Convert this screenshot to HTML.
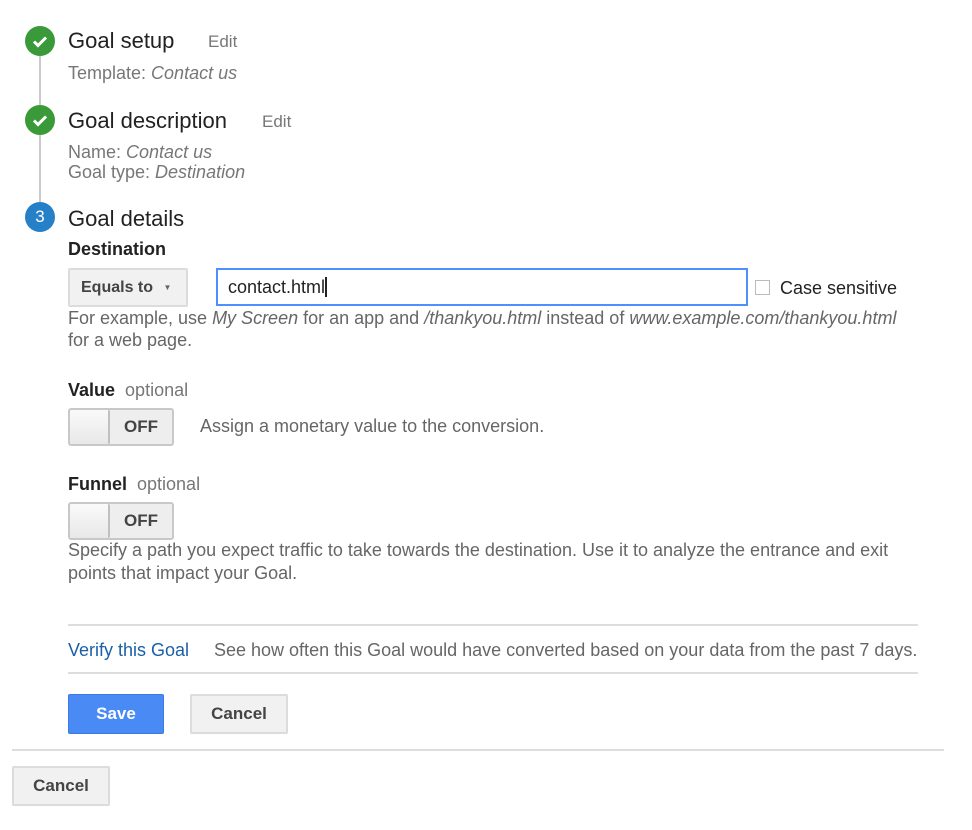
<!DOCTYPE html>
<html><head><style>
*{margin:0;padding:0;box-sizing:border-box}
body{width:972px;height:830px;background:#fff;font-family:"Liberation Sans",Arial,sans-serif;position:relative;overflow:hidden;color:#222}
.a{position:absolute;white-space:nowrap}
.c{position:absolute;width:30px;height:30px;border-radius:50%;left:25px;color:#fff;text-align:center;line-height:30px;font-size:17px}
.g{background:#3a9a3a}
.h{font-size:22px;color:#222}
.e{font-size:17px;color:#777}
.s{font-size:18px;color:#777}
.t{font-size:18px;color:#666}
.btn{position:absolute;background:#f1f1f1;border:2px solid #dcdcdc;border-radius:2px;font-weight:bold;font-size:17px;color:#444;text-align:center}
.tog{position:absolute;left:68px;width:106px;height:38px;border:2px solid #c8c8c8;border-radius:3px;background:#eee}
.tog .k{position:absolute;left:0;top:0;width:40px;height:34px;background:linear-gradient(#fafafa,#e8e8e8);border-right:2px solid #c0c0c0;border-radius:2px}
.tog .l{position:absolute;left:40px;right:0;top:0;line-height:34px;text-align:center;font-weight:bold;font-size:17px;color:#444}
hr{position:absolute;border:0;height:2px;background:#ddd}
</style></head><body>
<div class="a" style="left:39px;top:41px;width:2px;height:176px;background:#ccc"></div>
<div class="c g" style="top:26px"><svg width="30" height="30"><path d="M9 15.5l4 4 8-8" stroke="#fff" stroke-width="3" fill="none"/></svg></div>
<div class="c g" style="top:105px"><svg width="30" height="30"><path d="M9 15.5l4 4 8-8" stroke="#fff" stroke-width="3" fill="none"/></svg></div>
<div class="c" style="top:202px;background:#2680c8">3</div>
<div class="a h" style="left:68px;top:28px">Goal setup</div>
<div class="a e" style="left:208px;top:32px">Edit</div>
<div class="a s" style="left:68px;top:63px">Template: <i>Contact us</i></div>
<div class="a h" style="left:68px;top:108px">Goal description</div>
<div class="a e" style="left:262px;top:112px">Edit</div>
<div class="a s" style="left:68px;top:142px">Name: <i>Contact us</i></div>
<div class="a s" style="left:68px;top:162px">Goal type: <i>Destination</i></div>
<div class="a h" style="left:68px;top:206px">Goal details</div>
<div class="a" style="left:68px;top:239px;font-weight:bold;font-size:18px">Destination</div>
<div class="btn" style="left:68px;top:268px;width:120px;height:39px;line-height:35px;font-size:16px;text-align:left;padding-left:11px">Equals to <span style="font-size:8px;color:#666;margin-left:6px;vertical-align:2px">▼</span></div>
<div class="a" style="left:216px;top:268px;width:532px;height:38px;border:2px solid #4d90fe;font-size:18px;line-height:34px;padding-left:10px;color:#222">contact.html<span style="display:inline-block;width:2px;height:20px;background:#222;vertical-align:-4px"></span></div>
<div class="a" style="left:755px;top:280px;width:15px;height:15px;border:1px solid #bbb"></div>
<div class="a" style="left:780px;top:278px;font-size:18px">Case sensitive</div>
<div class="a t" style="left:68px;top:308px">For example, use <i>My Screen</i> for an app and <i>/thankyou.html</i> instead of <i>www.example.com/thankyou.html</i></div>
<div class="a t" style="left:68px;top:330px">for a web page.</div>
<div class="a" style="left:68px;top:380px;font-size:18px"><b>Value</b>&nbsp;&nbsp;<span style="color:#777">optional</span></div>
<div class="tog" style="top:408px"><div class="k"></div><div class="l">OFF</div></div>
<div class="a t" style="left:200px;top:416px">Assign a monetary value to the conversion.</div>
<div class="a" style="left:68px;top:474px;font-size:18px"><b>Funnel</b>&nbsp;&nbsp;<span style="color:#777">optional</span></div>
<div class="tog" style="top:502px"><div class="k"></div><div class="l">OFF</div></div>
<div class="a t" style="left:68px;top:540px">Specify a path you expect traffic to take towards the destination. Use it to analyze the entrance and exit</div>
<div class="a t" style="left:68px;top:563px">points that impact your Goal.</div>
<hr style="left:68px;top:624px;width:850px">
<div class="a" style="left:68px;top:640px;font-size:18px;color:#1a5fa8">Verify this Goal</div>
<div class="a t" style="left:214px;top:640px">See how often this Goal would have converted based on your data from the past 7 days.</div>
<hr style="left:68px;top:672px;width:850px">
<div class="a" style="left:68px;top:694px;width:96px;height:40px;background:#4a8af4;border:1px solid #3b7ae0;border-radius:2px;color:#fff;font-weight:bold;font-size:17px;text-align:center;line-height:38px">Save</div>
<div class="btn" style="left:190px;top:694px;width:98px;height:40px;line-height:36px">Cancel</div>
<hr style="left:12px;top:749px;width:932px">
<div class="btn" style="left:12px;top:766px;width:98px;height:40px;line-height:36px">Cancel</div>
</body></html>
